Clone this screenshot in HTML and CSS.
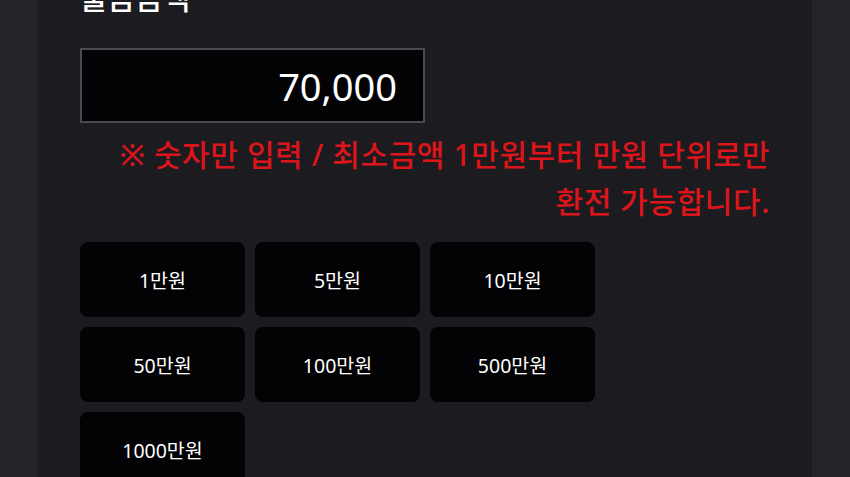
FILE: index.html
```html
<!DOCTYPE html>
<html lang="ko">

<head>
    <meta charset="UTF-8">
    <meta name="viewport" content="width=device-width, initial-scale=1.0">
    <title>출금</title>
    <link rel="stylesheet" href="styles.css">
</head>

<body>
    <div class="painel">
        <h2 class="titulo">출금금액</h2>
        <input type="text" id="valor" class="campo-valor" value="70,000">
        <p class="aviso">
            ※ 숫자만 입력 / 최소금액 1만원부터 만원 단위로만<br>
            환전 가능합니다.
        </p>
        <div class="botoes-valor">
            <button class="botao-valor">1만원</button>
            <button class="botao-valor">5만원</button>
            <button class="botao-valor">10만원</button>
            <button class="botao-valor">50만원</button>
            <button class="botao-valor">100만원</button>
            <button class="botao-valor">500만원</button>
            <button class="botao-valor">1000만원</button>
        </div>
    </div>
</body>

</html>
```

FILE: styles.css
```css
body {
    margin: 0;
    background-color: #242328;
    font-family: "Noto Sans", "Noto Sans CJK KR", sans-serif;
    color: #fff;
    overflow: hidden;
}

.painel {
    margin: 0 38px;
    padding: 0 42px 40px;
    min-height: 100vh;
    background-color: #1c1b20;
    box-sizing: border-box;
}

.titulo {
    margin: -22px 0 0;
    font-size: 30px;
    line-height: 40px;
    font-weight: 500;
}

.campo-valor {
    display: block;
    width: 345px;
    height: 75px;
    margin-top: 30px;
    padding: 0 26px;
    box-sizing: border-box;
    border: 2px solid #4b4a4f;
    background-color: #030204;
    color: #fff;
    font-family: inherit;
    font-size: 38px;
    text-align: right;
    outline: none;
}

.aviso {
    margin: 8px 0 0;
    color: #dc151b;
    font-size: 30px;
    font-weight: 500;
    line-height: 47px;
    letter-spacing: 0.6px;
    text-align: right;
}

.botoes-valor {
    display: grid;
    grid-template-columns: repeat(3, 165px);
    gap: 10px;
    margin-top: 17px;
}

.botao-valor {
    height: 75px;
    padding: 0;
    border: none;
    border-radius: 8px;
    background-color: #030204;
    color: #fff;
    font-family: inherit;
    font-size: 19.5px;
}
```
